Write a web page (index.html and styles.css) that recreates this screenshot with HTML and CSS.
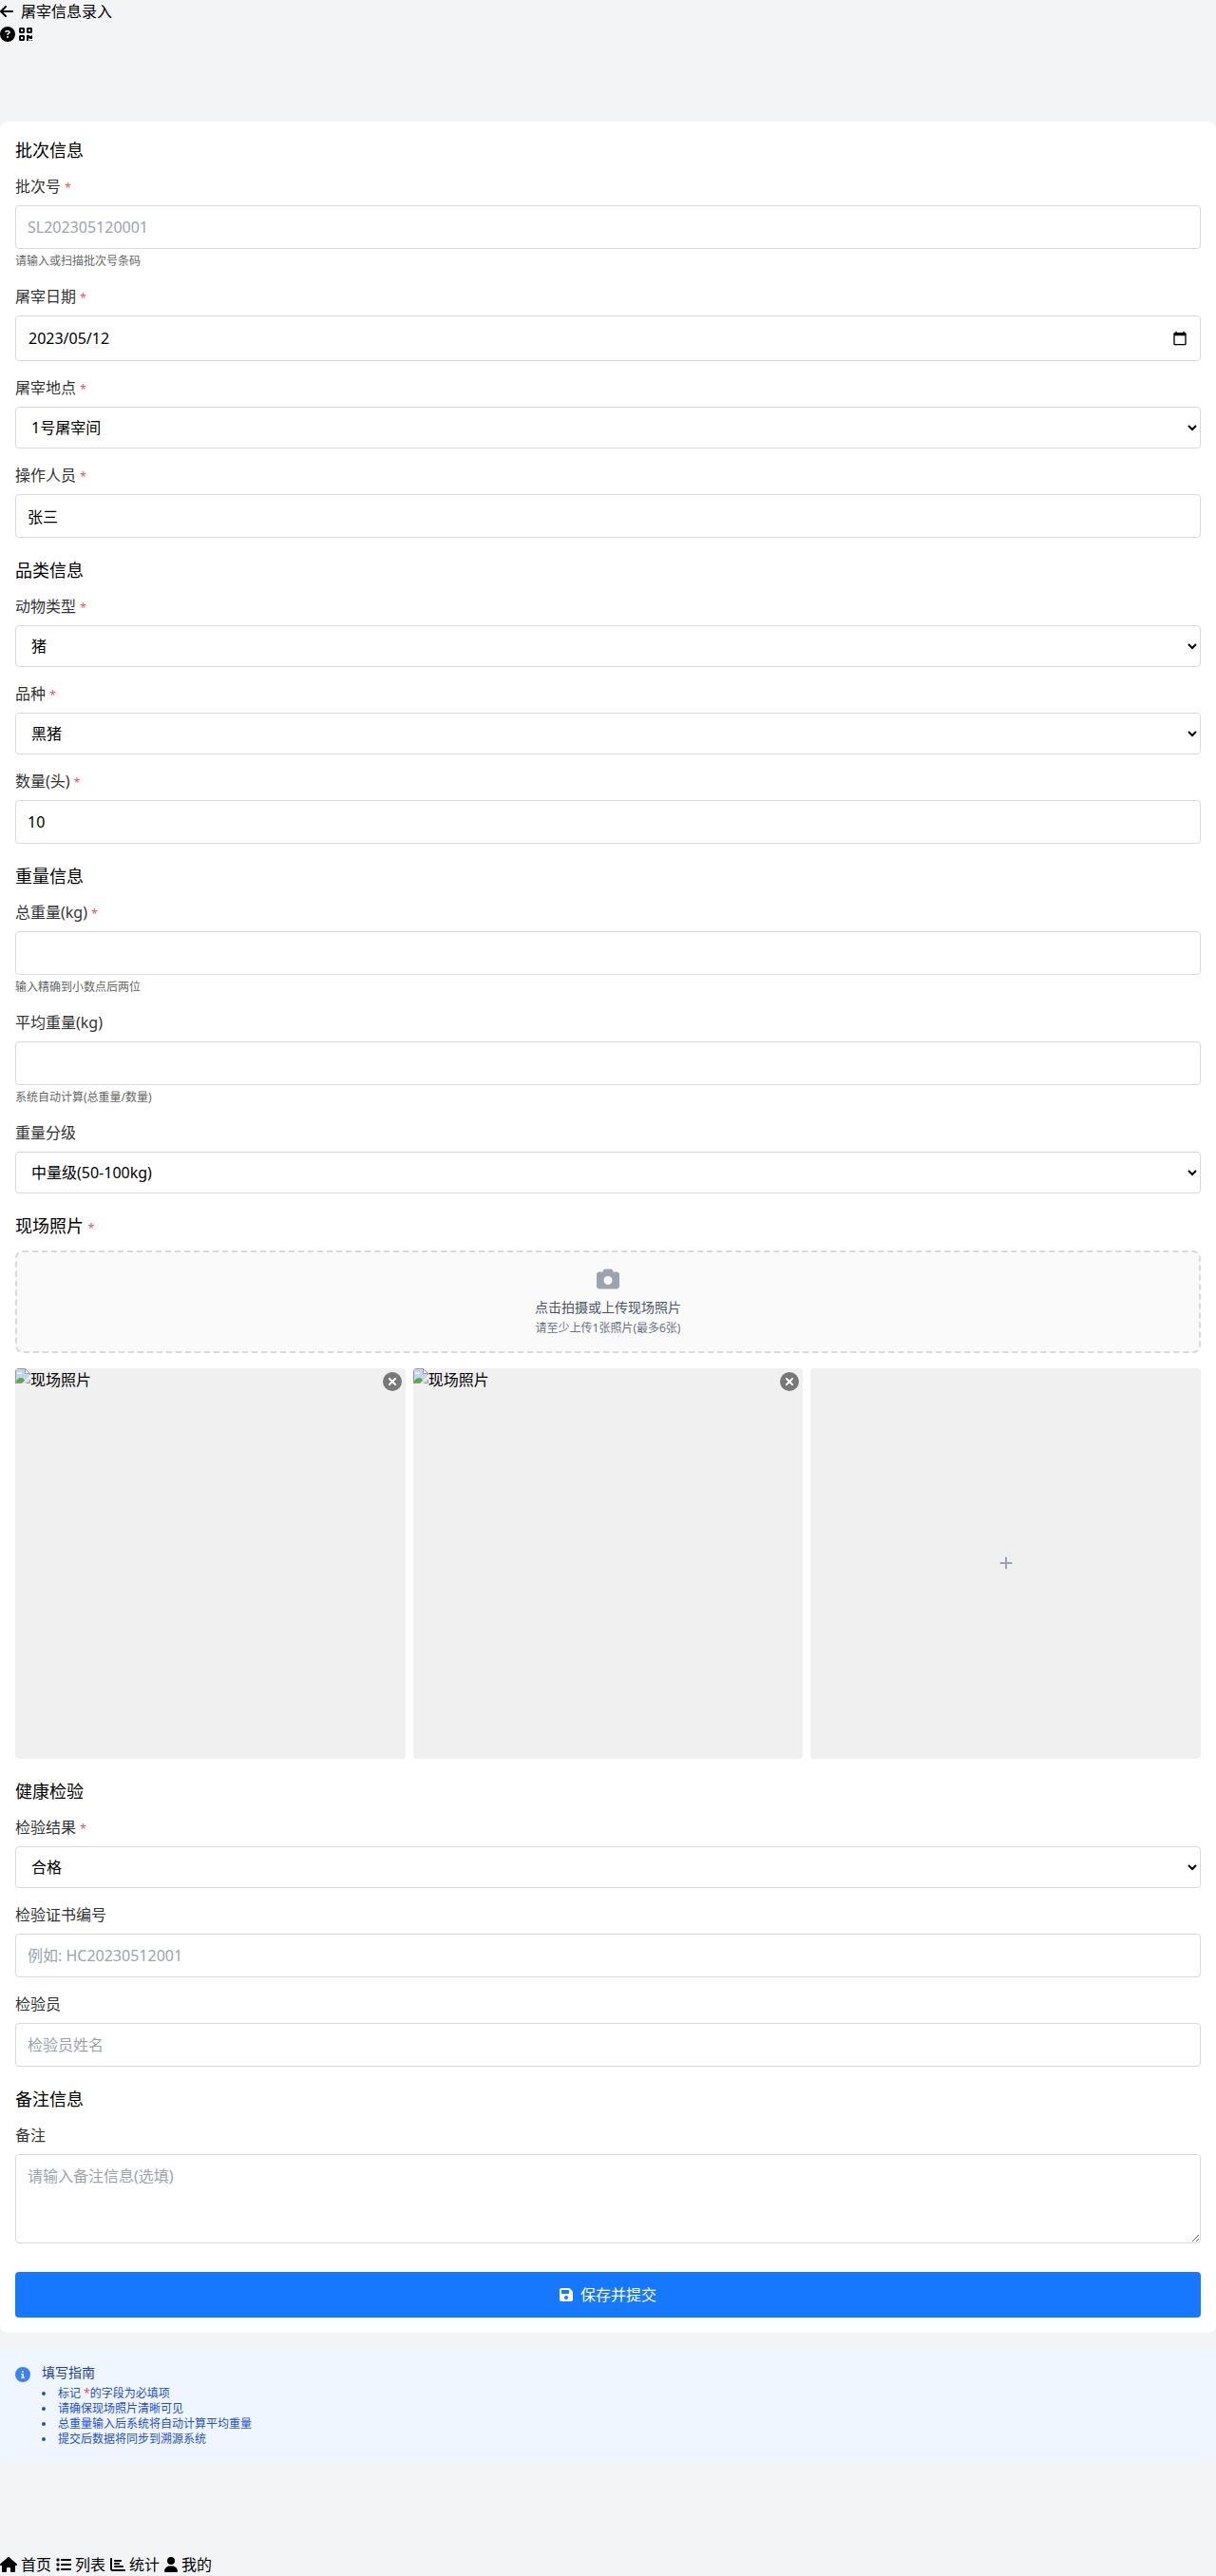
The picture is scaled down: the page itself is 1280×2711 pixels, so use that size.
FILE: index.html
```html
<!DOCTYPE html>
<html lang="zh-CN">
<head>
<meta charset="UTF-8">
<meta name="viewport" content="width=device-width, initial-scale=1">
<title>屠宰信息录入</title>
<link rel="stylesheet" href="styles.css">
</head>
<body>
<svg class="sprite" aria-hidden="true">
  <symbol id="arrow-left" viewBox="0 0 448 512"><path d="M9.4 233.4c-12.5 12.5-12.5 32.8 0 45.3l160 160c12.5 12.5 32.8 12.5 45.3 0s12.5-32.8 0-45.3L109.2 288 416 288c17.7 0 32-14.3 32-32s-14.3-32-32-32l-306.7 0L214.6 118.6c12.5-12.5 12.5-32.8 0-45.3s-32.8-12.5-45.3 0l-160 160z"/></symbol>
  <symbol id="circle-question" viewBox="0 0 512 512"><path d="M256 512A256 256 0 1 0 256 0a256 256 0 1 0 0 512zM169.8 165.3c7.9-22.3 29.1-37.3 52.8-37.3h58.3c34.9 0 63.1 28.3 63.1 63.1c0 22.6-12.1 43.5-31.7 54.8L280 264.4c-.2 13-10.9 23.6-24 23.6c-13.3 0-24-10.7-24-24V250.5c0-8.6 4.6-16.5 12.1-20.8l44.3-25.4c4.7-2.7 7.6-7.7 7.6-13.1c0-8.4-6.8-15.1-15.1-15.1H222.6c-3.4 0-6.4 2.1-7.5 5.3l-.4 1.2c-4.4 12.5-18.2 19-30.6 14.6s-19-18.2-14.6-30.6l.4-1.2zM224 352a32 32 0 1 1 64 0 32 32 0 1 1 -64 0z"/></symbol>
  <symbol id="qrcode" viewBox="0 0 448 512"><path d="M0 80C0 53.5 21.5 32 48 32h96c26.5 0 48 21.5 48 48v96c0 26.5-21.5 48-48 48H48c-26.5 0-48-21.5-48-48V80zM64 96v64h64V96H64zM0 336c0-26.5 21.5-48 48-48h96c26.5 0 48 21.5 48 48v96c0 26.5-21.5 48-48 48H48c-26.5 0-48-21.5-48-48V336zm64 16v64h64V352H64zM304 32h96c26.5 0 48 21.5 48 48v96c0 26.5-21.5 48-48 48H304c-26.5 0-48-21.5-48-48V80c0-26.5 21.5-48 48-48zm80 64H320v64h64V96zM256 304c0-8.8 7.2-16 16-16h64c8.8 0 16 7.2 16 16s7.2 16 16 16h32c8.8 0 16-7.2 16-16s7.2-16 16-16s16 7.2 16 16v96c0 8.8-7.2 16-16 16H368c-8.8 0-16-7.2-16-16s-7.2-16-16-16s-16 7.2-16 16v64c0 8.8-7.2 16-16 16H272c-8.8 0-16-7.2-16-16V304zM368 480a16 16 0 1 1 0-32 16 16 0 1 1 0 32zm64 0a16 16 0 1 1 0-32 16 16 0 1 1 0 32z"/></symbol>
  <symbol id="camera" viewBox="0 0 512 512"><path d="M149.1 64.8L138.7 96H64C28.7 96 0 124.7 0 160V416c0 35.3 28.7 64 64 64H448c35.3 0 64-28.7 64-64V160c0-35.3-28.7-64-64-64H373.3L362.9 64.8C356.4 45.2 338.1 32 317.4 32H194.6c-20.7 0-39 13.2-45.5 32.8zM256 192a96 96 0 1 1 0 192 96 96 0 1 1 0-192z"/></symbol>
  <symbol id="xmark" viewBox="0 0 384 512"><path d="M342.6 150.6c12.5-12.5 12.5-32.8 0-45.3s-32.8-12.5-45.3 0L192 210.7 86.6 105.4c-12.5-12.5-32.8-12.5-45.3 0s-12.5 32.8 0 45.3L146.7 256 41.4 361.4c-12.5 12.5-12.5 32.8 0 45.3s32.8 12.5 45.3 0L192 301.3 297.4 406.6c12.5 12.5 32.8 12.5 45.3 0s12.5-32.8 0-45.3L237.3 256 342.6 150.6z"/></symbol>
  <symbol id="plus" viewBox="0 0 448 512"><path d="M256 80c0-17.7-14.3-32-32-32s-32 14.3-32 32V224H48c-17.7 0-32 14.3-32 32s14.3 32 32 32H192V432c0 17.7 14.3 32 32 32s32-14.3 32-32V288H400c17.7 0 32-14.3 32-32s-14.3-32-32-32H256V80z"/></symbol>
  <symbol id="floppy" viewBox="0 0 448 512"><path d="M64 32C28.7 32 0 60.7 0 96V416c0 35.3 28.7 64 64 64H384c35.3 0 64-28.7 64-64V173.3c0-17-6.7-33.3-18.7-45.3L352 50.7C340 38.7 323.7 32 306.7 32H64zm0 96c0-17.7 14.3-32 32-32H288c17.7 0 32 14.3 32 32v64c0 17.7-14.3 32-32 32H96c-17.7 0-32-14.3-32-32V128zM224 288a64 64 0 1 1 0 128 64 64 0 1 1 0-128z"/></symbol>
  <symbol id="circle-info" viewBox="0 0 512 512"><path d="M256 512A256 256 0 1 0 256 0a256 256 0 1 0 0 512zM216 336h24V272H216c-13.3 0-24-10.7-24-24s10.7-24 24-24h48c13.3 0 24 10.7 24 24v88h8c13.3 0 24 10.7 24 24s-10.7 24-24 24H216c-13.3 0-24-10.7-24-24s10.7-24 24-24zm40-208a32 32 0 1 1 0 64 32 32 0 1 1 0-64z"/></symbol>
  <symbol id="house" viewBox="0 0 576 512"><path d="M575.8 255.5c0 18-15 32.1-32 32.1h-32l.7 160.2c0 2.7-.2 5.4-.5 8.1V472c0 22.1-17.9 40-40 40H456c-1.1 0-2.2 0-3.3-.1c-1.4 .1-2.8 .1-4.2 .1H416 392c-22.1 0-40-17.9-40-40V448 384c0-17.7-14.3-32-32-32H256c-17.7 0-32 14.3-32 32v64 24c0 22.1-17.9 40-40 40H160 128.1c-1.5 0-3-.1-4.5-.2c-1.2 .1-2.4 .2-3.6 .2H104c-22.1 0-40-17.9-40-40V360c0-.9 0-1.9 .1-2.8V287.6H32c-18 0-32-14-32-32.1c0-9 3-17 10-24L266.4 8c7-7 15-8 22-8s15 2 21 7L564.8 231.5c8 7 12 15 11 24z"/></symbol>
  <symbol id="list" viewBox="0 0 512 512"><path d="M40 48C26.7 48 16 58.7 16 72v48c0 13.3 10.7 24 24 24H88c13.3 0 24-10.7 24-24V72c0-13.3-10.7-24-24-24H40zM192 64c-17.7 0-32 14.3-32 32s14.3 32 32 32H480c17.7 0 32-14.3 32-32s-14.3-32-32-32H192zm0 160c-17.7 0-32 14.3-32 32s14.3 32 32 32H480c17.7 0 32-14.3 32-32s-14.3-32-32-32H192zm0 160c-17.7 0-32 14.3-32 32s14.3 32 32 32H480c17.7 0 32-14.3 32-32s-14.3-32-32-32H192zM16 232v48c0 13.3 10.7 24 24 24H88c13.3 0 24-10.7 24-24V232c0-13.3-10.7-24-24-24H40c-13.3 0-24 10.7-24 24zM40 368c-13.3 0-24 10.7-24 24v48c0 13.3 10.7 24 24 24H88c13.3 0 24-10.7 24-24V392c0-13.3-10.7-24-24-24H40z"/></symbol>
  <symbol id="chart-bar" viewBox="0 0 512 512"><path d="M32 32c17.7 0 32 14.3 32 32V400c0 8.8 7.2 16 16 16H480c17.7 0 32 14.3 32 32s-14.3 32-32 32H80c-44.2 0-80-35.8-80-80V64C0 46.3 14.3 32 32 32zm96 96c0-17.7 14.3-32 32-32l192 0c17.7 0 32 14.3 32 32s-14.3 32-32 32H160c-17.7 0-32-14.3-32-32zm32 64H288c17.7 0 32 14.3 32 32s-14.3 32-32 32H160c-17.7 0-32-14.3-32-32s14.3-32 32-32zm0 96H416c17.7 0 32 14.3 32 32s-14.3 32-32 32H160c-17.7 0-32-14.3-32-32s14.3-32 32-32z"/></symbol>
  <symbol id="user" viewBox="0 0 448 512"><path d="M224 256A128 128 0 1 0 224 0a128 128 0 1 0 0 256zm-45.7 48C79.8 304 0 383.8 0 482.3C0 498.7 13.3 512 29.7 512H418.3c16.4 0 29.7-13.3 29.7-29.7C448 383.8 368.2 304 269.7 304H178.3z"/></symbol>
  <symbol id="calendar" viewBox="0 0 24 24"><path d="M20 3h-1V1h-2v2H7V1H5v2H4c-1.1 0-2 .9-2 2v16c0 1.1.9 2 2 2h16c1.1 0 2-.9 2-2V5c0-1.1-.9-2-2-2zm0 18H4V8h16v13z"/></symbol>
  <symbol id="missing" viewBox="0 0 16 16">
    <path fill="#c3d5f5" d="M0 0h10l5 5v11H0z"/>
    <path fill="#fff" d="M2 6c0-2 2-2 2.5-1C6 4 7 5 7 6zM10 0v5h5z"/>
    <path fill="#5aaf3c" d="M1 15c0-3 3-5 5-5 3 0 4 2 5 5z"/>
    <path fill="none" stroke="#999" d="M.5 16V.5h10l5 5V7M10.5.5v5h5M0 15.5h9M15.5 12v3.5H12"/>
    <path fill="#f0f0f0" d="M16 7v3l-7 6H7z"/>
  </symbol>
</svg>

<header class="header">
  <div class="header-row header-title">
    <a href="#" class="icon-link" aria-label="返回"><svg class="icon icon-14"><use href="#arrow-left"/></svg></a>
    <span>屠宰信息录入</span>
  </div>
  <div class="header-row">
    <a href="#" class="icon-link" aria-label="帮助"><svg class="icon"><use href="#circle-question"/></svg></a>
    <a href="#" class="icon-link" aria-label="扫码"><svg class="icon icon-14"><use href="#qrcode"/></svg></a>
  </div>
</header>

<main class="main">
  <form class="card">
    <section class="section">
      <h2 class="section-title">批次信息</h2>
      <div class="group">
        <label class="label" for="batch">批次号 <span class="required">*</span></label>
        <input class="control" id="batch" type="text" placeholder="SL202305120001">
        <p class="hint">请输入或扫描批次号条码</p>
      </div>
      <div class="group">
        <label class="label" for="date">屠宰日期 <span class="required">*</span></label>
        <div class="date-field">
          <input class="date-input" id="date" type="text" value="2023/05/12">
          <button class="date-button" type="button" aria-label="选择日期"><svg class="icon"><use href="#calendar"/></svg></button>
        </div>
      </div>
      <div class="group">
        <label class="label" for="place">屠宰地点 <span class="required">*</span></label>
        <select class="control select" id="place"><option>1号屠宰间</option><option>2号屠宰间</option></select>
      </div>
      <div class="group">
        <label class="label" for="operator">操作人员 <span class="required">*</span></label>
        <input class="control" id="operator" type="text" value="张三">
      </div>
    </section>

    <section class="section">
      <h2 class="section-title">品类信息</h2>
      <div class="group">
        <label class="label" for="animal">动物类型 <span class="required">*</span></label>
        <select class="control select" id="animal"><option>猪</option><option>牛</option><option>羊</option></select>
      </div>
      <div class="group">
        <label class="label" for="breed">品种 <span class="required">*</span></label>
        <select class="control select" id="breed"><option>黑猪</option><option>白猪</option></select>
      </div>
      <div class="group">
        <label class="label" for="count">数量(头) <span class="required">*</span></label>
        <input class="control" id="count" type="number" value="10">
      </div>
    </section>

    <section class="section">
      <h2 class="section-title">重量信息</h2>
      <div class="group">
        <label class="label" for="total">总重量(kg) <span class="required">*</span></label>
        <input class="control" id="total" type="number" step="0.01">
        <p class="hint">输入精确到小数点后两位</p>
      </div>
      <div class="group">
        <label class="label" for="average">平均重量(kg)</label>
        <input class="control" id="average" type="number" readonly>
        <p class="hint">系统自动计算(总重量/数量)</p>
      </div>
      <div class="group">
        <label class="label" for="grade">重量分级</label>
        <select class="control select" id="grade"><option>中量级(50-100kg)</option></select>
      </div>
    </section>

    <section class="section">
      <h2 class="section-title">现场照片 <span class="required">*</span></h2>
      <button class="upload" type="button">
        <svg class="icon icon-24 upload-icon"><use href="#camera"/></svg>
        <span class="upload-text">点击拍摄或上传现场照片</span>
        <span class="upload-hint">请至少上传1张照片(最多6张)</span>
      </button>
      <div class="photos">
        <div class="photo">
          <svg class="icon"><use href="#missing"/></svg><span>现场照片</span>
          <button class="photo-remove" type="button" aria-label="删除照片"><svg class="icon icon-12"><use href="#xmark"/></svg></button>
        </div>
        <div class="photo">
          <svg class="icon"><use href="#missing"/></svg><span>现场照片</span>
          <button class="photo-remove" type="button" aria-label="删除照片"><svg class="icon icon-12"><use href="#xmark"/></svg></button>
        </div>
        <button class="photo photo-add" type="button" aria-label="添加照片"><svg class="icon"><use href="#plus"/></svg></button>
      </div>
    </section>

    <section class="section">
      <h2 class="section-title">健康检验</h2>
      <div class="group">
        <label class="label" for="result">检验结果 <span class="required">*</span></label>
        <select class="control select" id="result"><option>合格</option><option>不合格</option></select>
      </div>
      <div class="group">
        <label class="label" for="certificate">检验证书编号</label>
        <input class="control" id="certificate" type="text" placeholder="例如: HC20230512001">
      </div>
      <div class="group">
        <label class="label" for="inspector">检验员</label>
        <input class="control" id="inspector" type="text" placeholder="检验员姓名">
      </div>
    </section>

    <section class="section">
      <h2 class="section-title">备注信息</h2>
      <div class="group">
        <label class="label" for="remark">备注</label>
        <textarea class="control textarea" id="remark" placeholder="请输入备注信息(选填)"></textarea>
      </div>
    </section>

    <button class="submit" type="submit"><svg class="icon icon-14"><use href="#floppy"/></svg>保存并提交</button>
  </form>

  <aside class="guide">
    <svg class="icon guide-icon"><use href="#circle-info"/></svg>
    <div>
      <h3 class="guide-title">填写指南</h3>
      <ul class="guide-list">
        <li>标记 <span class="required">*</span>的字段为必填项</li>
        <li>请确保现场照片清晰可见</li>
        <li>总重量输入后系统将自动计算平均重量</li>
        <li>提交后数据将同步到溯源系统</li>
      </ul>
    </div>
  </aside>
</main>

<nav class="nav">
  <a class="nav-link" href="#"><svg class="icon icon-18"><use href="#house"/></svg>首页</a>
  <a class="nav-link" href="#"><svg class="icon"><use href="#list"/></svg>列表</a>
  <a class="nav-link" href="#"><svg class="icon"><use href="#chart-bar"/></svg>统计</a>
  <a class="nav-link" href="#"><svg class="icon icon-14"><use href="#user"/></svg>我的</a>
</nav>
</body>
</html>
```
FILE: styles.css
```css
*,
*::before,
*::after {
  box-sizing: border-box;
}

body {
  margin: 0;
  background: #f3f4f6;
  color: #000;
  font-family: "Noto Sans", "Noto Sans CJK SC", sans-serif;
  font-size: 16px;
  line-height: 24px;
}

h2,
h3,
p,
ul {
  margin: 0;
  padding: 0;
  font-weight: 400;
}

a {
  color: inherit;
  text-decoration: none;
}

button,
input,
select,
textarea {
  margin: 0;
  color: inherit;
  font: inherit;
}

button {
  padding: 0;
  border: 0;
  background: none;
  cursor: pointer;
}

.sprite {
  display: none;
}

.icon {
  display: block;
  flex: none;
  width: 16px;
  height: 16px;
  fill: currentColor;
}

.icon-12 { width: 12px; height: 12px; }
.icon-14 { width: 14px; }
.icon-18 { width: 18px; }
.icon-24 { width: 24px; height: 24px; }

.header-row {
  display: flex;
  align-items: center;
  gap: 4px;
  height: 24px;
}

.header-title {
  gap: 8px;
}

.main {
  padding: 80px 0;
}

.card {
  padding: 16px;
  border-radius: 8px;
  background: #fff;
}

.section {
  margin-bottom: 20px;
}

.section-title {
  margin-bottom: 12px;
  font-size: 18px;
  line-height: 28px;
}

.group + .group {
  margin-top: 16px;
}

.label {
  display: block;
  margin-bottom: 8px;
  color: #333;
}

.required {
  color: #ff4d4f;
  font-size: 12px;
  line-height: 12px;
}

.control {
  display: block;
  width: 100%;
  height: 46px;
  padding: 0 12px;
  border: 1px solid #d9d9d9;
  border-radius: 4px;
  background: #fff;
}

.control::placeholder {
  color: #9ca3af;
  opacity: 1;
}

.control[type="number"] {
  appearance: textfield;
}

.select {
  height: 44px;
}

.textarea {
  height: 94px;
  padding: 10px 12px;
  resize: vertical;
}

.hint {
  margin-top: 4px;
  color: #666;
  font-size: 12px;
  line-height: 18px;
}

.date-field {
  display: flex;
  align-items: center;
  height: 48px;
  padding: 0 13px;
  border: 1px solid #d9d9d9;
  border-radius: 4px;
}

.date-input {
  flex: 1;
  min-width: 0;
  padding: 0;
  border: 0;
  background: none;
}

.upload {
  display: flex;
  flex-direction: column;
  align-items: center;
  width: 100%;
  padding: 16px;
  border: 2px dashed #d9d9d9;
  border-radius: 8px;
  background: #fafafa;
}

.upload-icon {
  margin-bottom: 8px;
  color: #9ca3af;
}

.upload-text {
  margin-bottom: 4px;
  color: #4b5563;
  font-size: 14px;
  line-height: 20px;
}

.upload-hint {
  color: #6b7280;
  font-size: 12px;
  line-height: 16px;
}

.photos {
  display: grid;
  grid-template-columns: repeat(3, 1fr);
  gap: 8px;
  margin-top: 16px;
}

.photo {
  position: relative;
  display: flex;
  align-items: flex-start;
  aspect-ratio: 1;
  border-radius: 4px;
  background: #f0f0f0;
  overflow: hidden;
}

.photo-remove {
  position: absolute;
  top: 4px;
  right: 4px;
  display: flex;
  align-items: center;
  justify-content: center;
  width: 20px;
  height: 20px;
  border-radius: 50%;
  background: rgba(0, 0, 0, 0.5);
  color: #fff;
}

.photo-remove .icon {
  stroke: currentColor;
  stroke-width: 36;
}

.photo-add {
  align-items: center;
  justify-content: center;
  color: #9ca3af;
}

.submit {
  display: flex;
  align-items: center;
  justify-content: center;
  gap: 8px;
  width: 100%;
  height: 48px;
  margin-top: 30px;
  border-radius: 4px;
  background: #1677ff;
  color: #fff;
}

.guide {
  display: flex;
  gap: 12px;
  margin: 16px 0;
  padding: 16px;
  border-radius: 8px;
  background: #eff6ff;
}

.guide-icon {
  margin-top: 4px;
  color: #3b82f6;
}

.guide-title {
  margin-bottom: 4px;
  color: #1e40af;
  font-size: 14px;
  line-height: 20px;
}

.guide-list {
  color: #1d4ed8;
  font-size: 12px;
  line-height: 16px;
  list-style: disc inside;
}

.nav {
  display: flex;
  gap: 5px;
}

.nav-link {
  display: flex;
  align-items: center;
  gap: 4px;
}
```
